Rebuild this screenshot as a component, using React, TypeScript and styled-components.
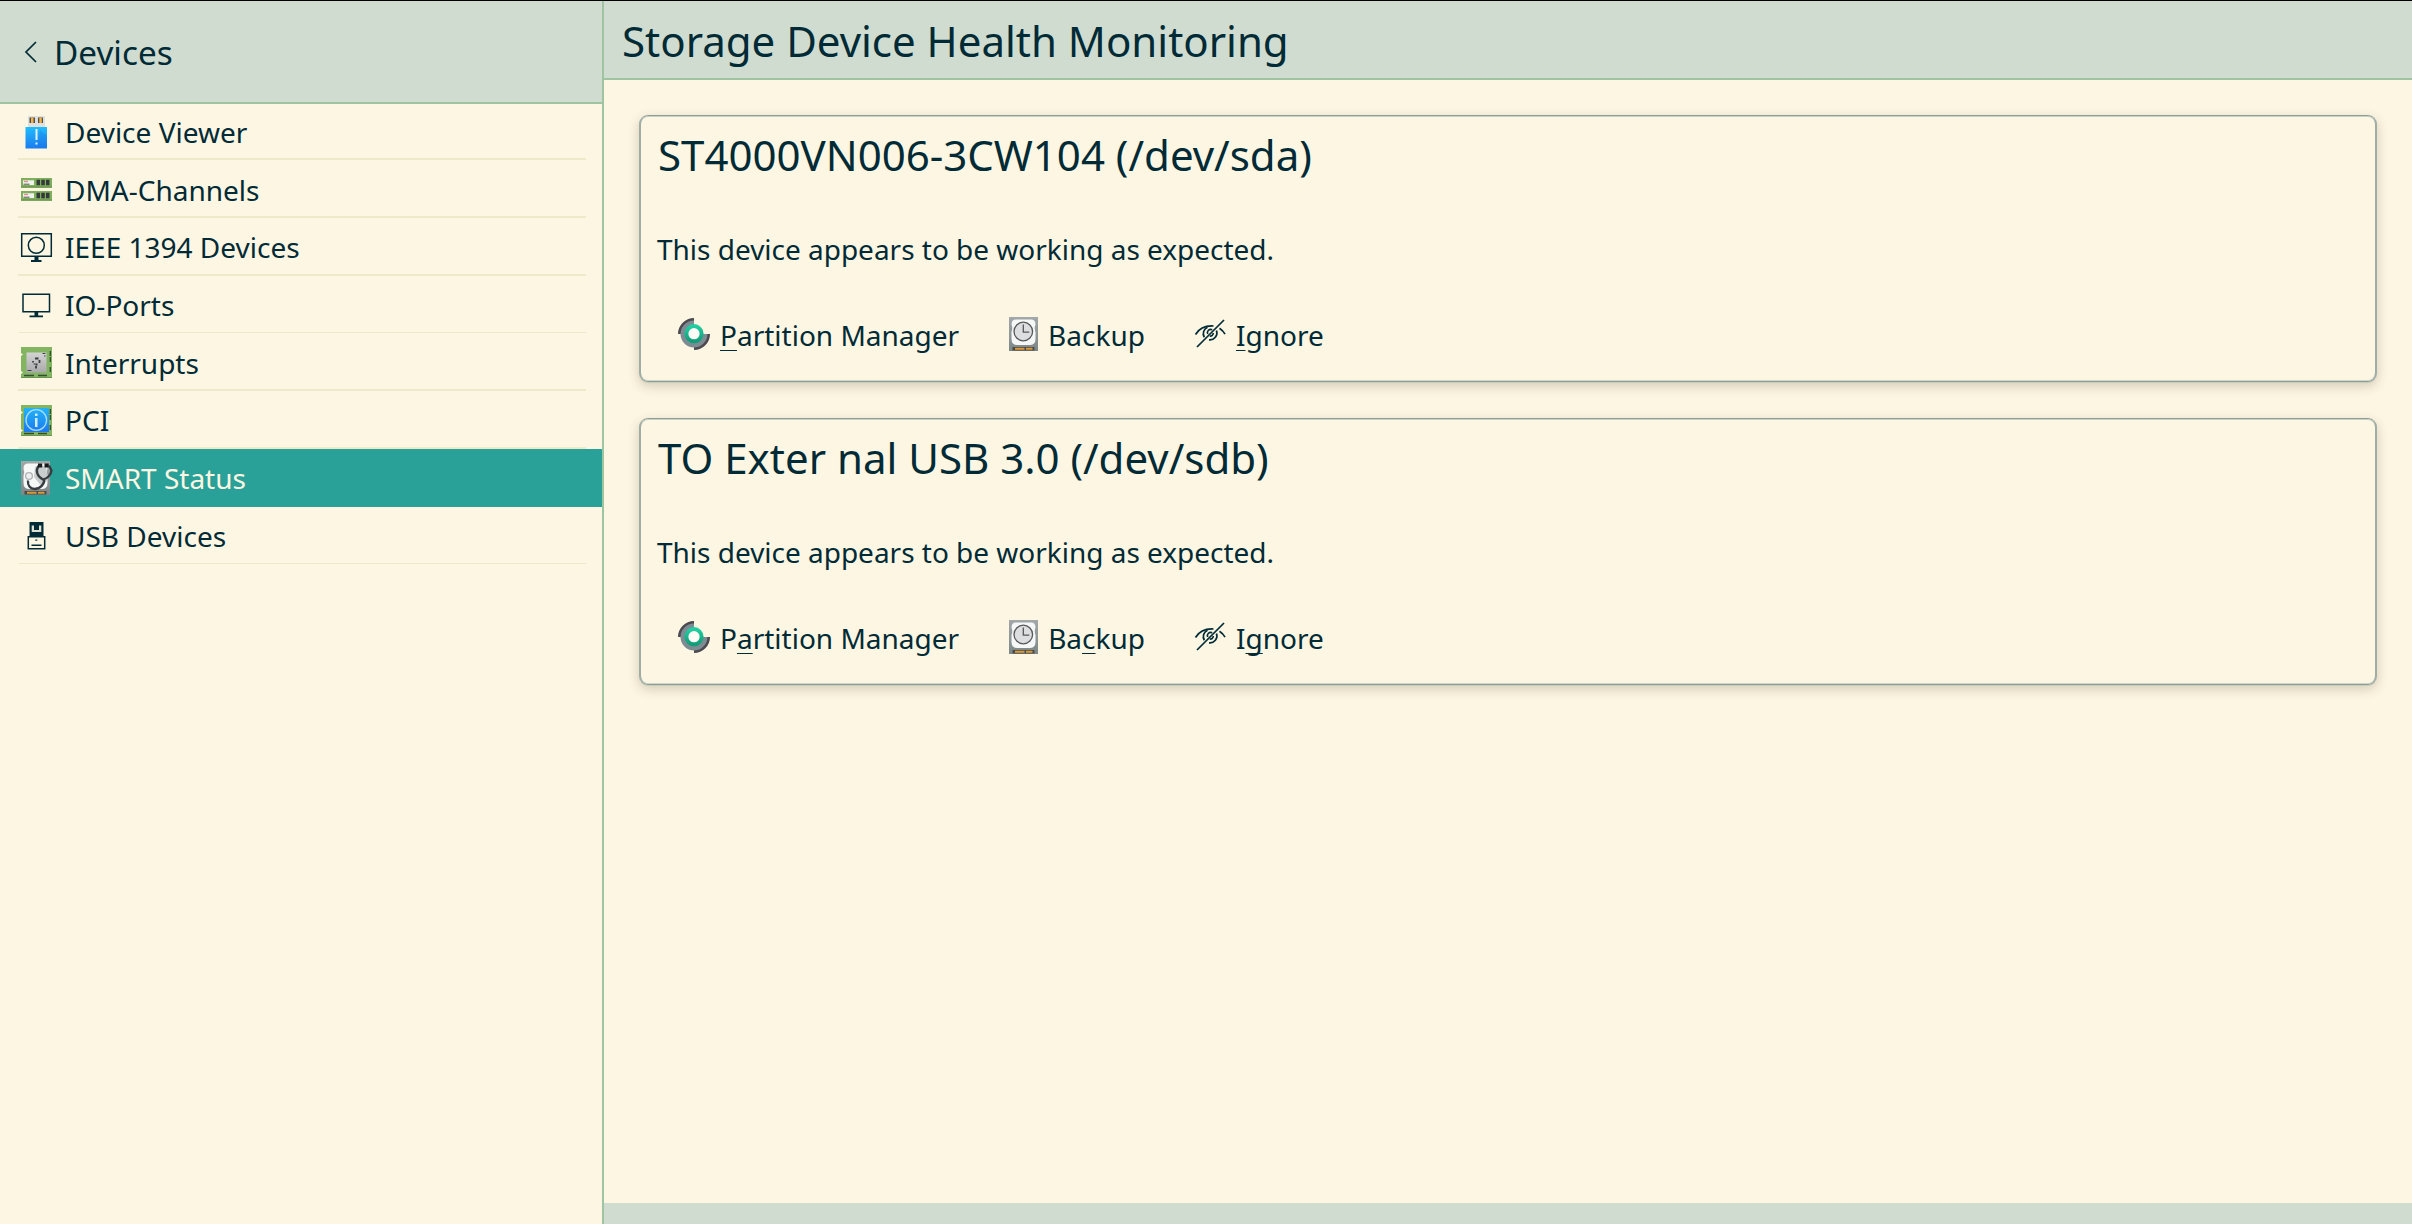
import React from "react";
import styled, { createGlobalStyle } from "styled-components";

const c = {
  ink: "#002b36",
  view: "#fdf6e3",
  header: "#d1dcd0",
  line: "#9fc4a1",
  separator: "#eee9c8",
  select: "#2aa198",
};

const Global = createGlobalStyle`
  *, *::before, *::after { box-sizing: border-box; }
  html, body { margin: 0; background: ${c.view}; }
  body { font-family: "Noto Sans", sans-serif; font-size: 28px; color: ${c.ink}; overflow: hidden; }
  svg { display: block; flex: none; }
`;

const Window = styled.div`
  display: flex;
  width: 2412px;
  height: 1224px;
  border-top: 1px solid #000;
  background: ${c.view};
`;

const Sidebar = styled.nav`
  display: flex;
  flex-direction: column;
  width: 604px;
  border-right: 2px solid ${c.line};
`;

const SidebarHeader = styled.header`
  display: flex;
  align-items: center;
  height: 103px;
  padding-left: 22px;
  gap: 12px;
  background: ${c.header};
  border-bottom: 2px solid ${c.line};
  font-size: 33.3px;
`;

const Row = styled.div<{ $h: number; $active?: boolean }>`
  display: flex;
  height: ${(p) => p.$h}px;
  padding: 0 16px 0 18px;
  background: ${(p) => (p.$active ? c.select : "transparent")};
  color: ${(p) => (p.$active ? c.view : c.ink)};
`;

const RowInner = styled.div<{ $line: number }>`
  flex: 1;
  display: flex;
  align-items: center;
  gap: 11px;
  padding-top: ${(p) => p.$line}px;
  border-bottom: ${(p) => p.$line}px solid ${(p) => (p.$line ? c.separator : "transparent")};
  white-space: nowrap;
`;

const RowLabel = styled.span<{ $drop: number }>`
  padding-top: ${(p) => p.$drop * 2}px;
`;

const Main = styled.main`
  flex: 1;
  display: flex;
  flex-direction: column;
`;

const TitleBar = styled.h1`
  display: flex;
  align-items: center;
  margin: 0;
  height: 79px;
  padding: 2px 0 0 18px;
  background: ${c.header};
  border-bottom: 2px solid ${c.line};
  font-size: 42px;
  font-weight: 400;
`;

const CardList = styled.section`
  flex: 1;
  display: flex;
  flex-direction: column;
  gap: 36px;
  padding: 35px 35px 0;
`;

const Card = styled.article`
  height: 267px;
  padding: 15px 16px 0;
  border-style: solid;
  border-width: 1px 2px;
  border-color: #8c9e98 #9fada5;
  border-radius: 9px;
  box-shadow:
    inset 0 1px 0 #c9d1c5,
    inset 0 -1px 0 #cfd5c8,
    0 1px 0 #c9cdbd,
    0 4px 12px rgba(60, 50, 20, 0.22);
`;

const CardTitle = styled.h2`
  margin: 0;
  padding-left: 1px;
  line-height: 47px;
  font-size: 42px;
  font-weight: 400;
`;

const Status = styled.p`
  margin: 51px 0 0;
  line-height: 40px;
  font-size: 27.97px;
`;

const Actions = styled.div`
  display: flex;
  margin-top: 46px;
  padding-left: 20px;
  gap: 49px;
`;

const Action = styled.button`
  display: flex;
  align-items: center;
  gap: 9px;
  height: 40px;
  padding: 0;
  border: 0;
  background: none;
  color: inherit;
  font: inherit;

  svg {
    margin-bottom: 2px;
  }
`;

const Mnemonic = styled.span`
  text-decoration: underline;
  text-decoration-thickness: 1px;
  text-underline-offset: 4px;
  text-decoration-skip-ink: none;
`;

const Footer = styled.footer`
  height: 21px;
  background: ${c.header};
`;

const Icon = ({ children, w = 36 }: { children: React.ReactNode; w?: number }) => (
  <svg width={w} height={36} viewBox={`0 0 ${w} 36`} fill="none">
    {children}
  </svg>
);

const BackIcon = () => (
  <svg width={20} height={24} viewBox="0 0 20 24" fill="none" stroke={c.ink} strokeWidth={1.7}>
    <path d="M14 2 4 12l10 10" />
  </svg>
);

const StickIcon = () => (
  <Icon>
    <defs>
      <linearGradient id="stick" x1="0" y1="0" x2="0" y2="1">
        <stop offset="0" stopColor="#20bcfb" />
        <stop offset="1" stopColor="#1b7cf0" />
      </linearGradient>
    </defs>
    <path d="M10 2h17v11H10z" fill="#dedfdf" />
    <path d="M11.5 3.5h5.500v5.500h-5.500zM20 3.500h5v5.500h-5z" fill="#4f5052" />
    <path d="M13 3.500h2.500v5.500H13zM21.300 3.500h2.500v5.500h-2.500z" fill="#f5b03f" />
    <path d="M7.500 13h21.500v21.500H7.500z" fill="url(#stick)" />
    <path d="m22 16 7 6v12H19z" fill="#1a6fe0" opacity=".25" />
    <path d="M17.500 15h2v11h-2zM17.500 28.500h2v2h-2z" fill="#e4f2fd" />
  </Icon>
);

const RamStick = ({ y }: { y: number }) => (
  <g transform={`translate(3 ${y})`}>
    <path d="M0 0h31v9.500H0z" fill="#7fae5c" />
    <path d="M0 8.500h31v1.200H0z" fill="#648f45" />
    <path d="M2 2.300h11V7H2z" fill="#f1f1ef" />
    <path d="M3 3.500h4" stroke="#e58a8a" strokeWidth="1.300" />
    <path d="M2.500 6.200h6" stroke="#555" strokeWidth="1" />
    <path d="M15.500 1.800h3.500v5.400h-3.500zM20.300 1.800h3.500v5.400h-3.500zM25 1.800h3.500v5.400H25z" fill="#34393c" />
  </g>
);

const RamIcon = () => (
  <Icon>
    <RamStick y={7} />
    <RamStick y={20} />
  </Icon>
);

const CameraMonitorIcon = () => (
  <Icon>
    <path d="M3.700 4.700h29.600v22.600H3.700z" stroke={c.ink} strokeWidth="1.500" />
    <circle cx="18.300" cy="16.300" r="8" stroke={c.ink} strokeWidth="1.500" />
    <path d="M16.500 27.500h4V31h3v2H13v-2h3.500z" fill={c.ink} />
  </Icon>
);

const MonitorIcon = () => (
  <Icon>
    <path d="M5 7.200h26.500v17.600H5z" stroke={c.ink} strokeWidth="1.500" />
    <path d="M16.500 25h3.700v3.500H25v1.700H11.500v-1.700h5z" fill={c.ink} />
  </Icon>
);

const Board = () => (
  <>
    <path d="M3 3h31v31H3v-4l2-1.500L3 27V12l2-1.500L3 9z" fill="#83b461" />
    <path d="M3 33h31v1H3z" fill="#689650" />
    <path d="M32.300 7v11M32.300 23v6" stroke="#344c34" strokeWidth="1.300" strokeDasharray="5 1" />
    <path d="M6 31.500h10M20 31.500h9" stroke="#344c34" strokeWidth="1.500" />
  </>
);

const ChipIcon = () => (
  <Icon>
    <defs>
      <linearGradient id="chip" x1="0" y1="0" x2="0" y2="1">
        <stop offset="0" stopColor="#d4d4d4" />
        <stop offset="1" stopColor="#a9a9ab" />
      </linearGradient>
    </defs>
    <Board />
    <path d="M8.500 8.500h20v20h-20z" fill="url(#chip)" />
    <path d="M24.500 9.500h3M26 12h1.500M9.500 26.500h4" stroke="#404345" strokeWidth="1.200" />
    <path d="M17 14.500h3.500M15 17v1.500M21.500 16v3M19.500 20.500h-2M18 22v2.500M16.500 19.500v1" stroke="#3a3d3f" strokeWidth="1.800" />
  </Icon>
);

const InfoBoardIcon = () => (
  <Icon>
    <defs>
      <linearGradient id="info" x1="0" y1="0" x2="0" y2="1">
        <stop offset="0" stopColor="#20b4f8" />
        <stop offset="1" stopColor="#1c79ee" />
      </linearGradient>
    </defs>
    <Board />
    <path d="M6 6h25v24H6z" fill="url(#info)" />
    <circle cx="18.300" cy="18" r="10.300" stroke="#a9dcfb" strokeWidth="1.300" />
    <path d="M17 11.500h2.500V14H17zM17 16h2.500v9H17z" fill="#d4edfd" />
  </Icon>
);

const Disk = ({ id }: { id: string }) => (
  <>
    <defs>
      <linearGradient id={id} x1="0" y1="0" x2="0" y2="1">
        <stop offset="0" stopColor="#a3a8aa" />
        <stop offset="1" stopColor="#7d8788" />
      </linearGradient>
    </defs>
    <path d="M0 0h29v34H0z" fill={`url(#${id})`} />
    <path d="M7 2.500h15q4.500 0 4.500 5-1.500 3.500 0 7.500v7q0 6-6 6h-12q-6 0-6-6v-7q1.500-4 0-7.500 0-5 4.500-5z" fill="#f6f7f7" />
    <path d="M3.500 30h22v3.500h-22z" fill="#4a4a48" />
    <path d="M6 30.800h9.500v2H6zM17 30.800h6.500v2H17z" fill="#dc9a36" />
  </>
);

const SmartIcon = () => (
  <Icon>
    <g transform="translate(3 1)">
      <Disk id="smartDisk" />
    </g>
    <path d="M17 7q5-3 11 0l2 12-6 8-8-10z" fill="#c9cccd" />
    <path
      d="M20.500 6c-3.500 5-1 11 4.500 13.500 4.500-.5 8-5 8.500-9L31 5.500M26 19c1 5-4 10-9.500 10-4.500 0-7-4-6.500-8.500"
      stroke="#363c40"
      strokeWidth="2.300"
    />
    <path d="M20 3.500h4.200v4H20zM26.500 3.500h4.200v4h-4.200z" fill="#181a1c" />
    <circle cx="11" cy="16" r="3.400" fill="#eef0f0" stroke="#b0b4b6" strokeWidth="1.400" />
  </Icon>
);

const UsbIcon = () => (
  <Icon>
    <path d="M11.500 4h14v14h-14z" fill={c.ink} />
    <path d="M13.700 7.500H16V14h-2.300zM21 7.500h2.300V14H21zM16 12h5v2h-5z" fill="#dfe0d2" />
    <path d="M10.300 18.700h16.400v12H10.300z" fill={c.view} stroke={c.ink} strokeWidth="1.500" />
    <path d="M17.300 21.500h2v1.300h-2zM13.500 26.500h10V28h-10z" fill={c.ink} />
  </Icon>
);

const PartitionIcon = ({ id }: { id: string }) => (
  <Icon w={34}>
    <defs>
      <linearGradient id={id} x1="0" y1="0" x2="0" y2="1">
        <stop offset="0" stopColor="#22cfa2" />
        <stop offset="1" stopColor="#129c78" />
      </linearGradient>
    </defs>
    <path d="M17 2A16 16 0 0 0 1 18h16zM17 34a16 16 0 0 0 16-16H17z" fill="#4b494f" />
    <path d="M17 4.500A13.500 13.500 0 0 0 3.500 18c0 7.500 6 13.500 13.500 13.500S30.500 25.500 30.500 18H17z" fill="#7d8c92" />
    <circle cx="17" cy="17.700" r="7.600" fill="#fffdf8" stroke={`url(#${id})`} strokeWidth="4" />
  </Icon>
);

const BackupIcon = ({ id }: { id: string }) => (
  <Icon w={31}>
    <g transform="translate(1 1)">
      <Disk id={id} />
      <circle cx="14.300" cy="14.500" r="9.300" fill="#dddedf" stroke="#57585a" strokeWidth="1.300" />
      <path d="M14.300 7.500v7.700h6" stroke="#57585a" strokeWidth="1.300" />
    </g>
  </Icon>
);

const HiddenIcon = () => (
  <Icon w={33}>
    <g stroke={c.ink} strokeWidth="1.700">
      <path d="M3 31 30 4" />
      <path d="M1.500 18.500C5.500 12 11 9.500 19.500 10M25.500 12.200q3.500 2.300 5.500 6" />
      <path d="M10.300 21.300a7 7 0 0 1 3.200-10M22.500 14.500a7 7 0 0 1-7.500 9.300" />
      <path d="M13.700 18a3.300 3.300 0 0 1 4.500-4.300M19.300 17a3.300 3.300 0 0 1-3.500 3.200" />
    </g>
  </Icon>
);

const items = [
  { label: "Device Viewer", icon: <StickIcon />, h: 56, line: 2, drop: 0 },
  { label: "DMA-Channels", icon: <RamIcon />, h: 58, line: 2, drop: 1 },
  { label: "IEEE 1394 Devices", icon: <CameraMonitorIcon />, h: 58, line: 2, drop: 0 },
  { label: "IO-Ports", icon: <MonitorIcon />, h: 57, line: 1, drop: 0 },
  { label: "Interrupts", icon: <ChipIcon />, h: 58, line: 2, drop: 1 },
  { label: "PCI", icon: <InfoBoardIcon />, h: 58, line: 2, drop: 0 },
  { label: "SMART Status", icon: <SmartIcon />, h: 58, line: 0, drop: 0, active: true },
  { label: "USB Devices", icon: <UsbIcon />, h: 57, line: 1, drop: 0 },
];

const devices = [
  { id: "sda", title: "ST4000VN006-3CW104 (/dev/sda)", keys: [0, -1, 0] },
  { id: "sdb", title: "TO Exter nal USB 3.0 (/dev/sdb)", keys: [1, 2, 1] },
];

const Label = ({ text, at }: { text: string; at: number }) =>
  at < 0 ? (
    <span>{text}</span>
  ) : (
    <span>
      {text.slice(0, at)}
      <Mnemonic>{text[at]}</Mnemonic>
      {text.slice(at + 1)}
    </span>
  );

export default function App() {
  return (
    <Window>
      <Global />
      <Sidebar>
        <SidebarHeader>
          <BackIcon />
          Devices
        </SidebarHeader>
        {items.map((it) => (
          <Row key={it.label} $h={it.h} $active={it.active}>
            <RowInner $line={it.line}>
              {it.icon}
              <RowLabel $drop={it.drop}>{it.label}</RowLabel>
            </RowInner>
          </Row>
        ))}
      </Sidebar>
      <Main>
        <TitleBar>Storage Device Health Monitoring</TitleBar>
        <CardList>
          {devices.map((d) => (
            <Card key={d.id}>
              <CardTitle>{d.title}</CardTitle>
              <Status>This device appears to be working as expected.</Status>
              <Actions>
                <Action>
                  <PartitionIcon id={`part-${d.id}`} />
                  <Label text="Partition Manager" at={d.keys[0]} />
                </Action>
                <Action>
                  <BackupIcon id={`disk-${d.id}`} />
                  <Label text="Backup" at={d.keys[1]} />
                </Action>
                <Action>
                  <HiddenIcon />
                  <Label text="Ignore" at={d.keys[2]} />
                </Action>
              </Actions>
            </Card>
          ))}
        </CardList>
        <Footer />
      </Main>
    </Window>
  );
}
